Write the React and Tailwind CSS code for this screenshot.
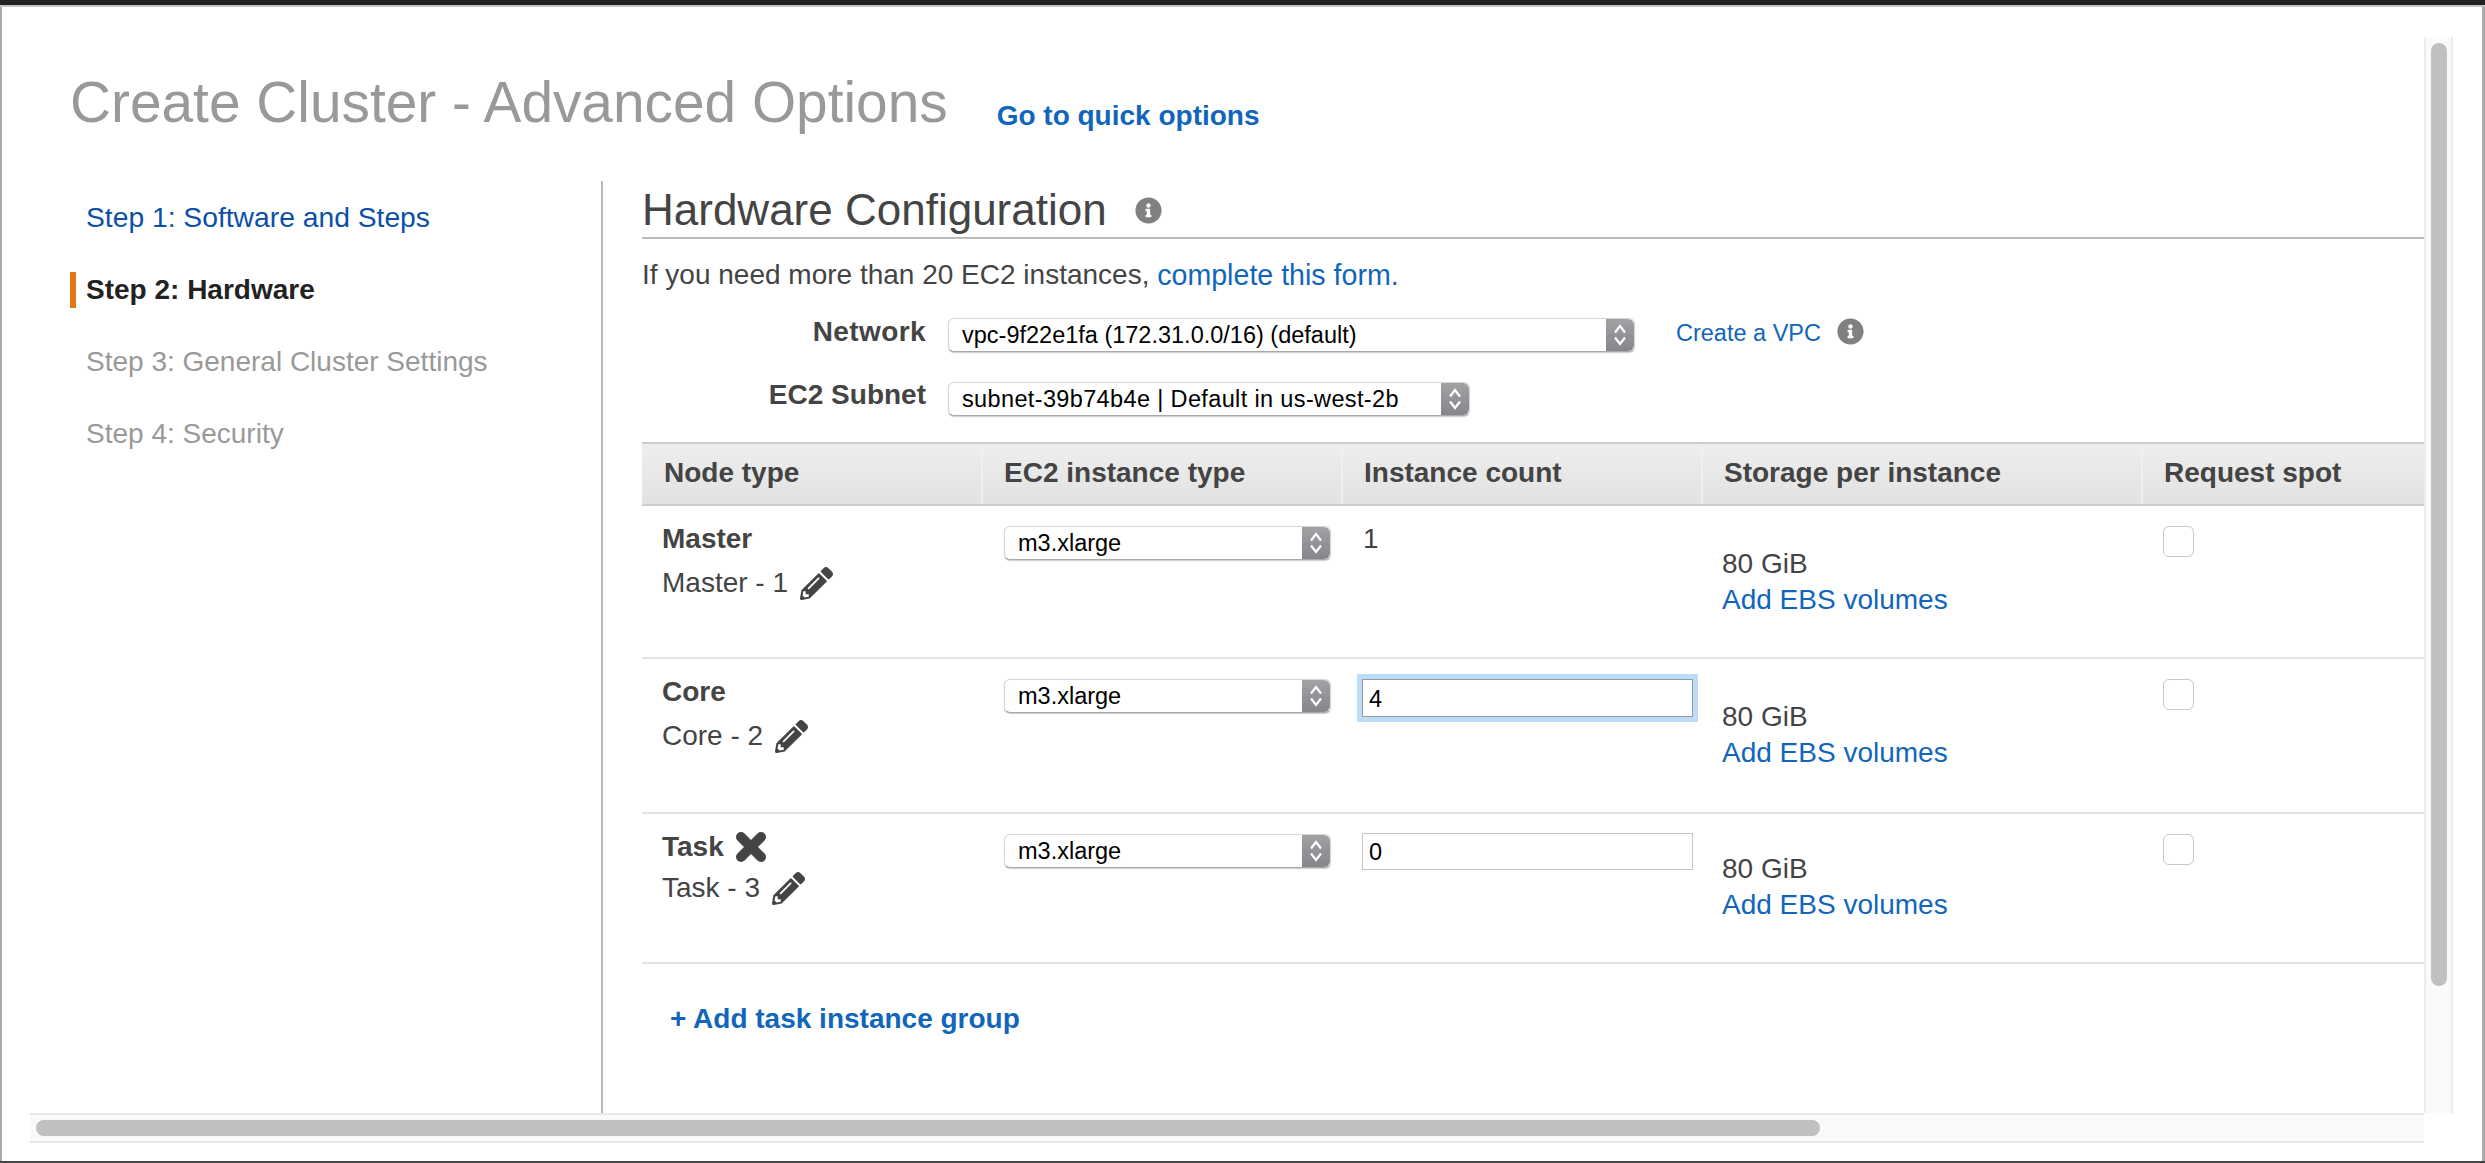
import React from "react";
import { FaInfoCircle, FaPencilAlt } from "react-icons/fa";

const GRID = "grid grid-cols-[339px_360px_360px_440px_1fr]";

function Stepper() {
  return (
    <div className="w-[28px] h-full shrink-0 flex items-center justify-center bg-gradient-to-b from-[#a3a3a6] to-[#85858a] rounded-r-[6px]">
      <svg width="14" height="24" viewBox="0 0 14 24" fill="none" stroke="#fff" strokeWidth="2.2">
        <path d="M2 9.5 7 3l5 6.5" />
        <path d="M2 14.5 7 21l5-6.5" />
      </svg>
    </div>
  );
}

function SelectBox({ value, width, spaced }) {
  return (
    <div
      className={`${width} h-[34px] flex items-center bg-white rounded-[6px] border border-[#d6d6d6] border-b-[#aaa] shadow-[0_1px_1px_rgba(0,0,0,0.2)] text-[23.5px] text-black`}
    >
      <span className={`flex-1 pl-[13px] pt-[2px] whitespace-nowrap ${spaced ? "tracking-[0.36px]" : ""}`}>{value}</span>
      <Stepper />
    </div>
  );
}

function Link({ children, className = "" }) {
  return <a className={`text-[#1166bb] ${className}`}>{children}</a>;
}

function Info({ className = "" }) {
  return <FaInfoCircle className={`text-[#808080] shrink-0 ${className}`} />;
}

function HeaderCell({ children, first }) {
  return (
    <div className={`flex items-center pb-[2px] ${first ? "pl-[22px]" : "pl-[21px] border-l-2 border-[#f0f0f0]"}`}>
      {children}
    </div>
  );
}

function RemoveIcon() {
  return (
    <svg className="ml-[11px] shrink-0" width="32" height="32" viewBox="0 0 32 32" fill="none" stroke="#444" strokeWidth="10" strokeLinecap="round">
      <path d="M6 6 26 26M26 6 6 26" />
    </svg>
  );
}

function NodeRow({ name, label, count, removable, tight, height }) {
  return (
    <div className={`${GRID} ${height} border-b-2 border-[#e2e2e2]`}>
      <div className="pl-[20px]">
        <div className="flex items-center font-bold h-[36px] mt-[15px]">
          {name}
          {removable && <RemoveIcon />}
        </div>
        <div className={`flex items-center h-[36px] ${tight ? "mt-[5px]" : "mt-[8px]"}`}>
          {label}
          <FaPencilAlt className="text-[#444] text-[33px] ml-[12px]" />
        </div>
      </div>
      <div className="pl-[23px] pt-[20px]">
        <SelectBox value="m3.xlarge" width="w-[327px]" />
      </div>
      <div className="pl-[21px] pt-[19px]">
        {count === "1" ? (
          <div className="h-[36px] flex items-center pl-[1px] -mt-[4px]">1</div>
        ) : (
          <input
            defaultValue={count}
            className={`block w-[331px] bg-white pl-[6px] pt-[2px] text-[23.5px] text-black outline-none border ${
              count === "4"
                ? "mt-[1px] h-[38px] border-[#999] shadow-[0_0_0_5px_#bcdcfb]"
                : "h-[37px] border-[#c4c4c4]"
            }`}
          />
        )}
      </div>
      <div className={`pl-[21px] ${tight ? "pt-[37px]" : "pt-[40px]"} leading-[36px]`}>
        <div>80 GiB</div>
        <Link className="block">Add EBS volumes</Link>
      </div>
      <div className="pl-[22px] pt-[20px]">
        <div className="w-[31px] h-[31px] rounded-[6px] border border-[#c8c8c8] bg-white" />
      </div>
    </div>
  );
}

export default function App() {
  return (
    <div className="w-[2485px] h-[1163px] overflow-hidden flex flex-col bg-white text-[#444] text-[28px] font-['Liberation_Sans',Arial,sans-serif]">
      <div className="h-[5px] shrink-0 bg-[#222]" />
      <div className="h-[2px] shrink-0 bg-[#c4c4c4]" />

      <div className="flex-1 min-h-0 flex flex-col border-l-2 border-r-[3px] border-[#aaa]">
        <div className="flex-1 min-h-0 flex pt-[30px] pr-[29px]">
          <div className="flex-1 min-w-0 flex flex-col">
            <div className="flex items-start pl-[68px] pt-[38px] shrink-0">
              <h1 className="text-[56.8px] leading-[56px] text-[#999]">Create Cluster - Advanced Options</h1>
              <Link className="ml-[49px] mt-[23px] font-bold text-[28px] leading-[36px]">Go to quick options</Link>
            </div>

            <div className="flex-1 min-h-0 flex pt-[47px]">
              <div className="w-[599px] pl-[68px] shrink-0 flex flex-col gap-[36px] pt-[19px]">
                <a className="text-[#0a50a8] text-[28.25px] pl-[16px] h-[36px] flex items-center pb-[2px]">Step 1: Software and Steps</a>
                <a className="text-[#222] font-bold pl-[10px] h-[36px] flex items-center border-l-[6px] border-[#e47911]">
                  Step 2: Hardware
                </a>
                <a className="text-[#999] pl-[16px] h-[36px] flex items-center">Step 3: General Cluster Settings</a>
                <a className="text-[#999] pl-[16px] h-[36px] flex items-center">Step 4: Security</a>
              </div>

              <div className="flex-1 min-w-0 border-l-2 border-[#bbb] pl-[39px]">
                <div className="flex items-center h-[54px] pt-[2px] box-content border-b-2 border-[#bbb] text-[44px] leading-[54px]">
                  Hardware Configuration
                  <Info className="text-[27px] ml-[28px]" />
                </div>

                <div className="mt-[18px] h-[36px] flex items-center whitespace-pre">
                  If you need more than 20 EC2 instances, <Link className="text-[28.6px]">complete this form.</Link>
                </div>

                <div className="mt-[25px] flex items-center h-[34px]">
                  <div className="w-[284px] text-right font-bold pb-[6px] tracking-[0.4px]">Network</div>
                  <div className="ml-[22px]">
                    <SelectBox value="vpc-9f22e1fa (172.31.0.0/16) (default)" width="w-[687px]" />
                  </div>
                  <Link className="ml-[41px] text-[23.5px] pb-[3px]">Create a VPC</Link>
                  <Info className="text-[27px] ml-[16px] mb-[8px]" />
                </div>

                <div className="mt-[30px] flex items-center h-[34px]">
                  <div className="w-[284px] text-right font-bold pb-[8px]">EC2 Subnet</div>
                  <div className="ml-[22px]">
                    <SelectBox value="subnet-39b74b4e | Default in us-west-2b" width="w-[522px]" spaced />
                  </div>
                </div>

                <div
                  className={`${GRID} mt-[26px] h-[64px] border-y-2 border-[#ccc] bg-gradient-to-b from-[#eeeeee] to-[#e2e2e2] font-bold`}
                >
                  <HeaderCell first>Node type</HeaderCell>
                  <HeaderCell>EC2 instance type</HeaderCell>
                  <HeaderCell>Instance count</HeaderCell>
                  <HeaderCell>Storage per instance</HeaderCell>
                  <HeaderCell>Request spot</HeaderCell>
                </div>

                <NodeRow name="Master" label="Master - 1" count="1" height="h-[153px]" />
                <NodeRow name="Core" label="Core - 2" count="4" height="h-[155px]" />
                <NodeRow name="Task" label="Task - 3" count="0" height="h-[150px]" removable tight />

                <div className="pl-[28px] pt-[34px]">
                  <Link className="font-bold">+ Add task instance group</Link>
                </div>
              </div>
            </div>
          </div>

          {/* vertical scrollbar */}
          <div className="w-[29px] shrink-0 bg-[#fafafa] border-x-2 border-[#ececec] pt-[6px] flex justify-center">
            <div className="w-[16px] h-[943px] rounded-full bg-[#c0c0c0]" />
          </div>
        </div>

        {/* horizontal scrollbar */}
        <div className="h-[30px] shrink-0 ml-[28px] mr-[58px] bg-[#fafafa] border-y-2 border-[#e8e8e8] flex items-center pl-[6px]">
          <div className="w-[1784px] h-[16px] rounded-full bg-[#c0c0c0]" />
        </div>
        <div className="h-[18px] shrink-0" />
      </div>

      <div className="h-[2px] shrink-0 bg-[#444]" />
    </div>
  );
}
